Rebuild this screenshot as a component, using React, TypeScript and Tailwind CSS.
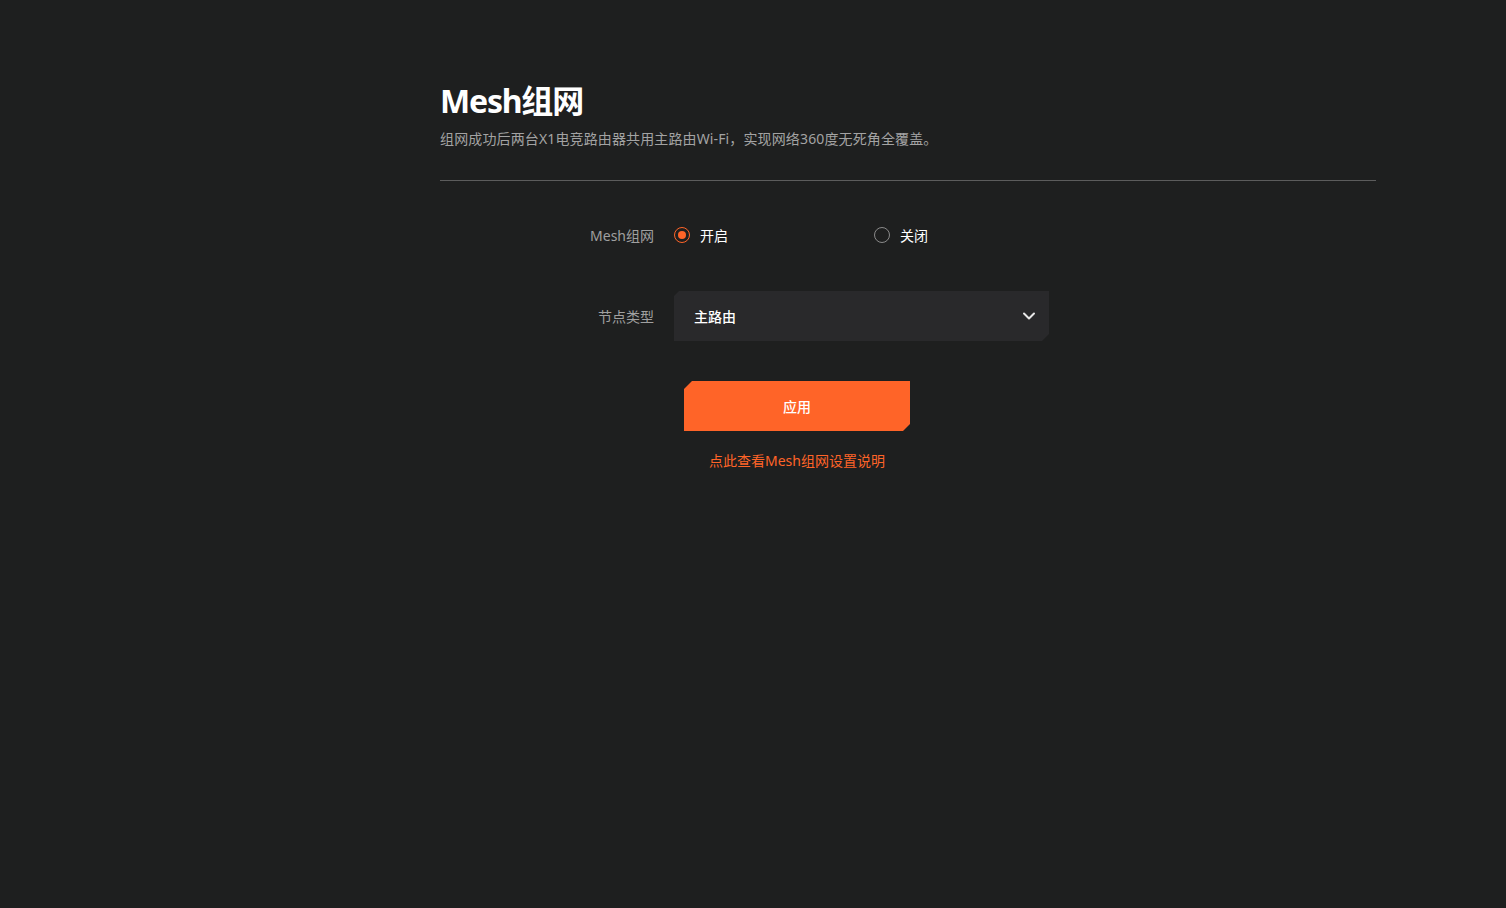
import React from "react";

const font = { fontFamily: '"Noto Sans", "Noto Sans CJK SC", sans-serif' };

export default function App() {
  return (
    <div className="min-h-[908px] w-full bg-[#1e1f1f] text-white" style={font}>
      <div className="ml-[440px] w-[936px] pt-[80px]">
        <h1 className="text-[32px] leading-[42px] font-bold text-white tracking-[-1.2px]">Mesh组网</h1>
        <p className="mt-[6px] text-[14px] leading-[22px] text-[#a3a3a3] tracking-[0.13px]">
          组网成功后两台X1电竞路由器共用主路由Wi-Fi，实现网络360度无死角全覆盖。
        </p>
        <div className="mt-[30px] h-px bg-[#5c5c5c]" />

        <div className="mt-[43px] flex items-center h-[22px]">
          <div className="w-[234px] pr-[20px] text-right text-[14px] text-[#a0a0a0]">Mesh组网</div>
          <div className="flex items-center w-[200px]">
            <span className="w-[16px] h-[16px] rounded-full border-[1.5px] border-[#ff6428] flex items-center justify-center">
              <span className="w-[8px] h-[8px] rounded-full bg-[#ff6428]" />
            </span>
            <span className="ml-[10px] text-[14px] text-white">开启</span>
          </div>
          <div className="flex items-center">
            <span className="w-[16px] h-[16px] rounded-full border border-[#8a8a8a]" />
            <span className="ml-[10px] text-[14px] text-white">关闭</span>
          </div>
        </div>

        <div className="mt-[45px] flex items-center">
          <div className="w-[234px] pr-[20px] text-right text-[14px] text-[#a0a0a0]">节点类型</div>
          <div className="w-[375px] h-[50px] bg-[#29292b] flex items-center justify-between pl-[20px] pr-[13px] [clip-path:polygon(5px_0,100%_0,100%_calc(100%-7px),calc(100%-7px)_100%,0_100%,0_5px)]">
            <span className="text-[14px] font-medium text-white">主路由</span>
            <svg width="14" height="14" viewBox="0 0 14 14" fill="none">
              <path d="M2 4.5 L7 9.5 L12 4.5" stroke="#e8e8e8" strokeWidth="2" strokeLinecap="round" strokeLinejoin="round" />
            </svg>
          </div>
        </div>

        <div className="mt-[40px] ml-[244px] w-[226px] flex flex-col items-center">
          <button className="w-[226px] h-[50px] bg-[#ff6428] text-white text-[14px] font-medium [clip-path:polygon(8px_0,100%_0,100%_calc(100%-7px),calc(100%-7px)_100%,0_100%,0_8px)]">
            应用
          </button>
          <a className="mt-[19px] text-[14px] text-[#ff6428] whitespace-nowrap">点此查看Mesh组网设置说明</a>
        </div>
      </div>
    </div>
  );
}
